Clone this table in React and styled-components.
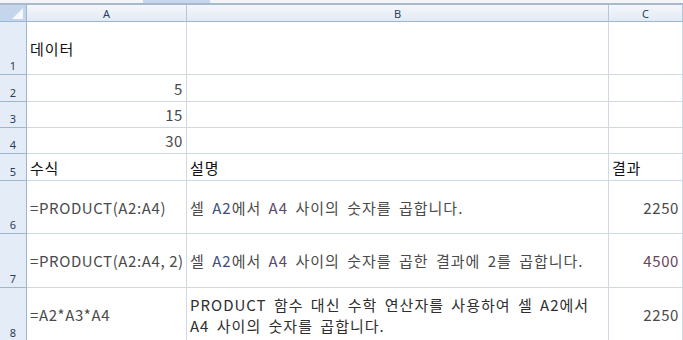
import React from "react";
import styled, { createGlobalStyle } from "styled-components";

const Global = createGlobalStyle`
  html, body { margin: 0; padding: 0; background: #fff; }
  body { font-family: "Noto Sans CJK KR", "Noto Sans", sans-serif; }
`;

const COLS = "27px 160px 422px 74px";

const Sheet = styled.div`
  width: 683px;
  height: 340px;
  overflow: hidden;
  background: #fff;
`;

const TopStrip = styled.div`
  height: 3px;
  background: #f3f5f8;
  border-bottom: 2px solid #a9b8cc;
  display: flex;
`;

const Tab = styled.div`
  margin-left: 143px;
  width: 67px;
  background: #c6d7ee;
`;

const Grid = styled.div`
  display: grid;
  grid-template-columns: ${COLS};
`;

const Corner = styled.div`
  height: 16px;
  background: #c4d5ec;
  border-right: 1px solid #9eb6ce;
  border-bottom: 1px solid #9eb6ce;
  position: relative;
  &::after {
    content: "";
    position: absolute;
    right: 3px;
    bottom: 2px;
    width: 0;
    height: 0;
    border-left: 11px solid transparent;
    border-bottom: 11px solid #f6f8fb;
  }
`;

const ColHead = styled.div`
  height: 16px;
  background: linear-gradient(#f4f7fb, #e3eaf4);
  border-right: 1px solid #b7c6da;
  border-bottom: 1px solid #9eb6ce;
  font-family: "Noto Sans", sans-serif;
  font-size: 11px;
  line-height: 17px;
  color: #27415f;
  text-align: center;
`;

const RowHead = styled.div`
  background: #e4ecf7;
  border-right: 1px solid #9eb6ce;
  border-bottom: 1px solid #9eb6ce;
  font-family: "Noto Sans", sans-serif;
  font-size: 11px;
  color: #2c3e56;
  display: flex;
  align-items: flex-end;
  justify-content: center;
  padding-bottom: 1px;
  box-sizing: border-box;
  height: ${(p) => p.$h}px;
`;

const Cell = styled.div`
  border-right: 1px solid #d0d7e5;
  border-bottom: 1px solid #d0d7e5;
  padding: 0 3px;
  display: flex;
  align-items: center;
  justify-content: ${(p) => (p.$right ? "flex-end" : "flex-start")};
  font-size: 15px;
  letter-spacing: ${(p) => (p.$wide ? "1px" : "0.6px")};
  word-spacing: ${(p) => (p.$wide ? "3px" : "0")};
  line-height: 21px;
  color: ${(p) => p.$color || "#4a4a4a"};
  white-space: nowrap;
  overflow: hidden;
  box-sizing: border-box;
  height: ${(p) => p.$h}px;
`;

const Text = styled.span`
  white-space: ${(p) => (p.$wrap ? "normal" : "nowrap")};
  display: block;
`;

const Ref = styled.span`
  color: #40507a;
`;

const Ref2 = styled.span`
  color: #5a4a70;
`;

const rows = [
  { n: 1, h: 53, a: "데이터", aColor: "#111", aWide: true },
  { n: 2, h: 27, a: "5", right: true },
  { n: 3, h: 26, a: "15", right: true },
  { n: 4, h: 26, a: "30", right: true },
  { n: 5, h: 27, a: "수식", b: "설명", c: "결과", color: "#111", cLeft: true },
  {
    n: 6,
    h: 53,
    a: "=PRODUCT(A2:A4)",
    b: (
      <>
        셀 <Ref>A2</Ref>에서 <Ref2>A4</Ref2> 사이의 숫자를 곱합니다.
      </>
    ),
    c: "2250",
  },
  {
    n: 7,
    h: 54,
    a: "=PRODUCT(A2:A4, 2)",
    b: (
      <>
        셀 <Ref>A2</Ref>에서 <Ref2>A4</Ref2> 사이의 숫자를 곱한 결과에 2를 곱합니다.
      </>
    ),
    c: "4500",
    cColor: "#6a4458",
  },
  {
    n: 8,
    h: 54,
    a: "=A2*A3*A4",
    b: "PRODUCT 함수 대신 수학 연산자를 사용하여 셀 A2에서 A4 사이의 숫자를 곱합니다.",
    wrap: true,
    bColor: "#2e2e2e",
    c: "2250",
  },
];

const App = () => (
  <Sheet>
    <Global />
    <TopStrip>
      <Tab />
    </TopStrip>
    <Grid>
      <Corner />
      <ColHead>A</ColHead>
      <ColHead>B</ColHead>
      <ColHead>C</ColHead>
      {rows.map((r) => (
        <React.Fragment key={r.n}>
          <RowHead $h={r.h}>{r.n}</RowHead>
          <Cell $h={r.h} $right={r.right} $wide={r.aWide} $color={r.aColor || r.color}>
            <Text>{r.a}</Text>
          </Cell>
          <Cell $h={r.h} $wide $color={r.bColor || r.color}>
            <Text $wrap={r.wrap}>{r.b}</Text>
          </Cell>
          <Cell $h={r.h} $right={!r.cLeft} $color={r.cColor || r.color}>
            <Text>{r.c}</Text>
          </Cell>
        </React.Fragment>
      ))}
    </Grid>
  </Sheet>
);

export default App;
